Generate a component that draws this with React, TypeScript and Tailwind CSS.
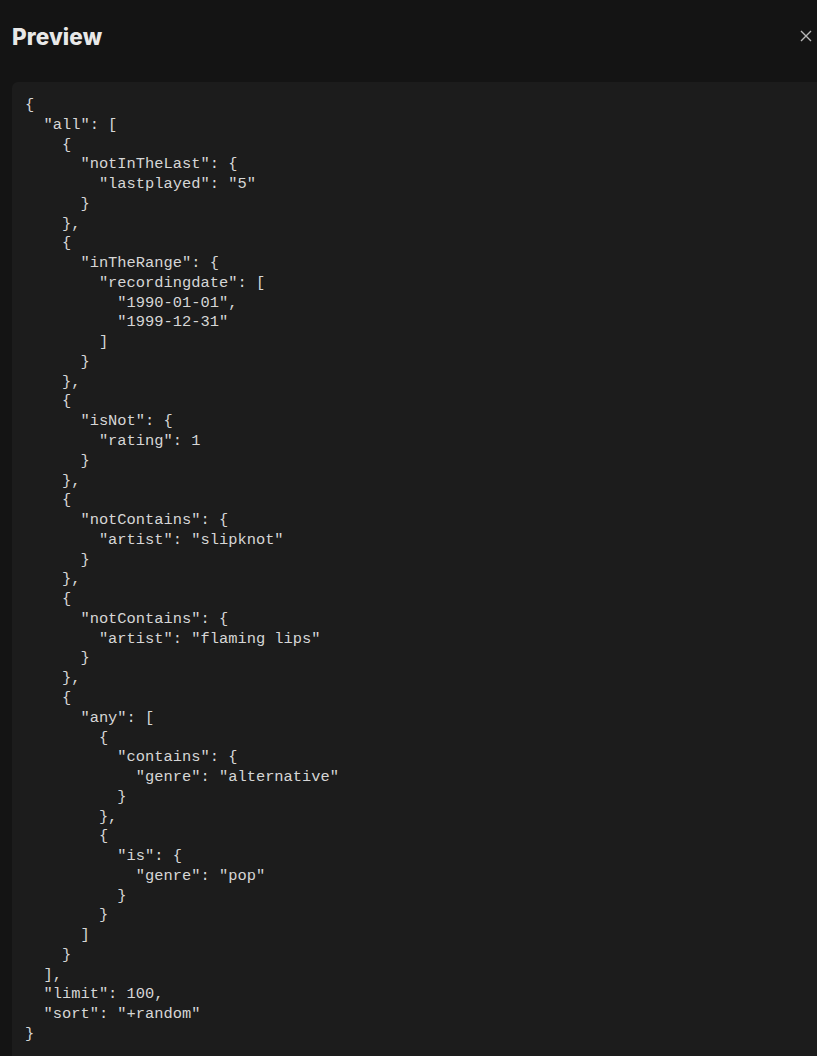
const rule = {
  all: [
    { notInTheLast: { lastplayed: "5" } },
    { inTheRange: { recordingdate: ["1990-01-01", "1999-12-31"] } },
    { isNot: { rating: 1 } },
    { notContains: { artist: "slipknot" } },
    { notContains: { artist: "flaming lips" } },
    {
      any: [
        { contains: { genre: "alternative" } },
        { is: { genre: "pop" } },
      ],
    },
  ],
  limit: 100,
  sort: "+random",
};

export default function App() {
  return (
    <div className="w-[817px] h-[1056px] overflow-hidden bg-[#141414] flex flex-col">
      <div className="flex items-center justify-between pl-[12px] pr-0 h-[72px] shrink-0">
        <h2 className="font-['Inter',sans-serif] font-extrabold text-[22.5px] tracking-[0.1px] text-[#e8e8e8] pt-[1px]">
          Preview
        </h2>
        <button className="text-[#b8b8b8] p-1" aria-label="Close">
          <svg width="14" height="14" viewBox="0 0 14 14" fill="none" stroke="currentColor" strokeWidth="1.4">
            <path d="M2 2l10 10M12 2L2 12" />
          </svg>
        </button>
      </div>
      <div className="ml-[12px] mt-[10px] flex-1 bg-[#1c1c1c] rounded-tl-md pt-[14px] pl-[13px]">
        <pre className="font-['Liberation_Mono',monospace] text-[15.4px] leading-[19.77px] text-[#d6d6d6]">
          {JSON.stringify(rule, null, 2)}
        </pre>
      </div>
    </div>
  );
}
